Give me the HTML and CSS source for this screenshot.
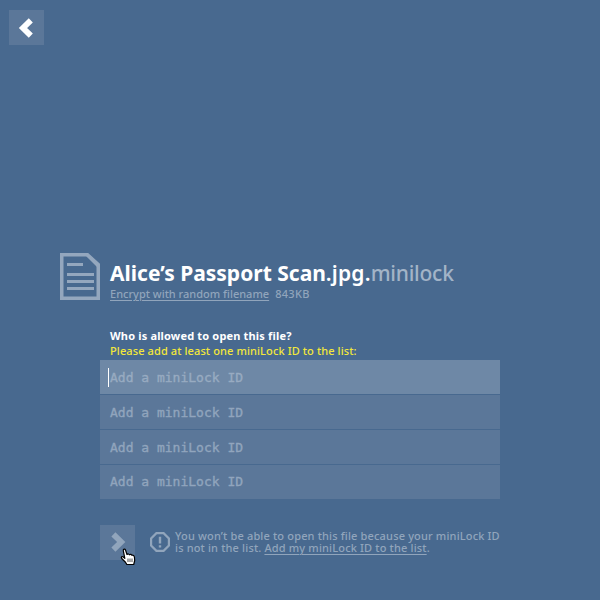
FILE: index.html
```html
<!DOCTYPE html>
<html lang="en">
<head>
<meta charset="utf-8">
<title>miniLock</title>
<link rel="stylesheet" href="styles.css">
</head>
<body>
<main class="screen">
  <button class="square back" aria-label="Back">
    <svg width="35" height="35" viewBox="0 0 35 35"><path class="chevron" d="M21.8 10.4 14 18 21.8 25.6"/></svg>
  </button>
  <header class="file">
    <svg class="file-icon" width="40" height="47" viewBox="0 0 40 47">
      <path class="sheet" d="M1.75 1.75H27.5L38.25 11.5V45.25H1.75Z"/>
      <path class="fold" d="M27 0 40 12V14L37 14 25 2Z"/>
      <path class="rules" d="M7 11.5H23M7 21.5H34M7 28.5H34M7 35.5H34"/>
    </svg>
    <div class="file-text">
      <h1 class="name"><span class="base">Alice’s Passport Scan</span><span class="ext">.jpg.</span><span class="suffix">minilock</span></h1>
      <p class="meta"><a class="link random">Encrypt with random filename</a><span class="size">843KB</span></p>
    </div>
  </header>
  <section class="access">
    <h2 class="question">Who is allowed to open this file?</h2>
    <p class="prompt">Please add at least one miniLock ID to the list:</p>
    <div class="ids">
      <div class="id focused"><i class="caret"></i>Add a miniLock ID</div>
      <div class="id">Add a miniLock ID</div>
      <div class="id">Add a miniLock ID</div>
      <div class="id last">Add a miniLock ID</div>
    </div>
  </section>
  <footer class="actions">
    <button class="square next" aria-label="Encrypt">
      <svg width="35" height="35" viewBox="0 0 35 35"><path class="chevron" d="M13.4 9.4 21.2 17 13.4 24.6"/></svg>
      <svg class="cursor" width="17" height="18" viewBox="0 0 17 18"><path class="hand" d="M4.8 10.3 3.3 2.7C3 1 5 .5 5.5 2L7 6.5C8 5.5 9 6 9.4 6.8 10.4 6 11.5 6.5 11.9 7.3 13 6.9 14.2 7.6 14.4 9L14.7 12.5 13.7 16.5H6.8L5.5 14.2 1.7 10.5C.7 9 2 8 3.3 9Z"/><path class="fingers" d="M8 10.5V14M10 10.5V14M12 10.5V14"/></svg>
    </button>
    <svg class="warning" width="20" height="20" viewBox="0 0 20 20"><path class="octagon" d="M6.4 1.1H13.6L18.9 6.4V13.6L13.6 18.9H6.4L1.1 13.6V6.4Z"/><path class="bang" d="M10 4.8V11.5M10 13.2V15.4"/></svg>
    <p class="notice">You won’t be able to open this file because your miniLock ID<br>is not in the list. <a class="link">Add my miniLock ID to the list</a>.</p>
  </footer>
</main>
</body>
</html>
```
FILE: styles.css
```css
* { box-sizing: border-box; margin: 0; padding: 0; }
body { background: #48698f; font-family: "Noto Sans", "Open Sans", sans-serif; color: #fff; }
.screen { width: 600px; height: 600px; overflow: hidden; padding: 10px 9px; }
.square { display: block; position: relative; width: 35px; height: 35px; border: 0; background: #5b7799; flex: none; }
.square svg { display: block; }
.chevron { fill: none; stroke: #fff; stroke-width: 5.8; }
.file { display: flex; gap: 10px; margin: 208px 0 0 51px; height: 47px; }
.file-icon { flex: none; }
.sheet { fill: none; stroke: #94a7be; stroke-width: 3.5; }
.fold { fill: #94a7be; }
.rules { stroke: #94a7be; stroke-width: 3; }
.file-text { white-space: nowrap; }
.name { font-size: 21px; line-height: 24px; padding-top: 8px; font-weight: 700; }
.ext { font-weight: 600; letter-spacing: .2px; }
.suffix { font-weight: 500; letter-spacing: -.25px; color: #a3b4c7; }
.meta { font-size: 11px; line-height: 14px; margin-top: 2px; font-weight: 500; color: #91a5bc; }
.link { text-decoration: underline; text-underline-offset: 2px; text-decoration-thickness: 1px; }
.size { margin-left: 6px; letter-spacing: .3px; }
.access { margin: 28px 0 0 91px; width: 400px; white-space: nowrap; }
.question { font-size: 11px; line-height: 16px; padding-left: 10px; letter-spacing: .17px; }
.prompt { font-size: 11px; line-height: 14px; padding-left: 10px; height: 16px; font-weight: 500; letter-spacing: .11px; color: #f3e83a; }
.ids { display: grid; gap: 1px; }
.id { position: relative; height: 34px; padding-left: 10px; background: #5b7799; color: #91a5bd; font: 13px/35px "DejaVu Sans Mono", monospace; -webkit-text-stroke: .35px #91a5bd; }
.id.focused { background: #6e88a6; color: #98abc1; -webkit-text-stroke-color: #98abc1; }
.id.last { line-height: 33px; }
.caret { position: absolute; left: 8px; top: 8px; width: 1px; height: 19px; background: #fff; }
.actions { display: flex; margin: 26px 0 0 91px; height: 35px; }
.next .chevron { stroke: #91a5bc; }
.square .cursor { position: absolute; left: 20px; top: 23px; }
.hand { fill: #fff; stroke: #000; stroke-width: 1.2; stroke-linejoin: round; }
.fingers { stroke: #000; stroke-width: .7; }
.warning { margin: 7px 5px 0 15px; flex: none; }
.octagon { fill: none; stroke: #91a5bc; stroke-width: 2.2; }
.bang { stroke: #91a5bc; stroke-width: 2.4; }
.notice { padding-top: 5px; font-size: 11px; line-height: 12px; font-weight: 500; letter-spacing: .16px; color: #91a5bc; white-space: nowrap; }
```
